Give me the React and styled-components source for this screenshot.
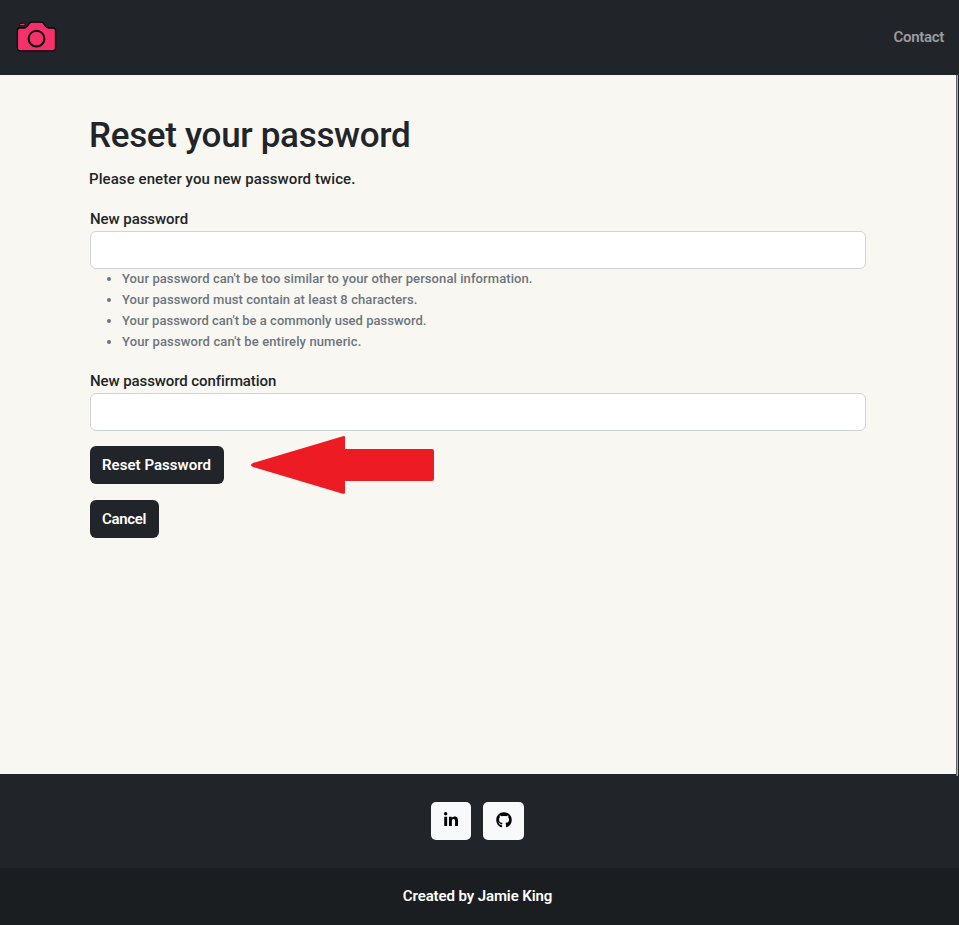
import React from "react";
import styled, { createGlobalStyle } from "styled-components";
import { FaLinkedinIn, FaGithub } from "react-icons/fa";

const GlobalStyle = createGlobalStyle`
  *, *::before, *::after { box-sizing: border-box; }
  body {
    margin: 0;
    overflow: hidden;
    background: #f8f7f2;
    color: #212529;
    font: 500 16px/24px Roboto, "Liberation Sans", sans-serif;
  }
`;

const Page = styled.div`
  height: 925px;
  display: flex;
  flex-direction: column;
  background: #212529;
`;
const Navbar = styled.nav`
  height: 75px;
  flex: none;
  padding: 0 15px 1px 16px;
  display: flex;
  align-items: center;
  justify-content: space-between;
`;
const Logo = styled.svg`
  display: block;
  width: 41px;
  height: 32px;
  margin-bottom: 2px;
`;
const NavLink = styled.a`
  color: #9b9d9e;
  font-weight: 600;
  font-size: 15px;
  letter-spacing: -0.3px;
`;
const Content = styled.main`
  position: relative;
  flex: 1;
  margin-right: 3px;
  padding: 40px 90px 0 90px;
  background: #f8f7f2;
`;
const ScrollEdge = styled.span`
  position: absolute;
  top: 0;
  right: -2px;
  width: 2px;
  height: calc(100% + 2px);
  background: linear-gradient(to right, #62646a 50%, #a9aaa8 50%);
`;
const Title = styled.h1`
  margin: 0 0 10px -1px;
  font-size: 35px;
  line-height: 42px;
  font-weight: 500;
  letter-spacing: ${(p) => p.$tracking}px;
  white-space: nowrap;
`;
const Text = styled.p`
  margin: 0 0 16px -1px;
  font-size: 15px;
  letter-spacing: ${(p) => p.$tracking}px;
`;
const Field = styled.div`
  margin-bottom: ${(p) => p.$gap}px;
`;
const Label = styled.label`
  display: block;
  font-size: 15px;
  letter-spacing: ${(p) => p.$tracking}px;
`;
const Input = styled.input`
  display: block;
  width: 100%;
  height: 38px;
  padding: 6px 12px;
  font: inherit;
  background: #fff;
  border: 1px solid #ced4da;
  border-radius: 6px;
`;
const Hints = styled.ul`
  margin: -1px 0 0;
  padding-left: 32px;
  color: #6c757d;
  font-size: 13px;
  line-height: 21px;
`;
const Hint = styled.li`
  letter-spacing: ${(p) => p.$tracking}px;
`;
const Actions = styled.div`
  display: flex;
  flex-direction: column;
  align-items: flex-start;
  gap: 16px;
`;
const ActionRow = styled.div`
  display: flex;
  height: 38px;
`;
const Button = styled.button`
  width: ${(p) => p.$width}px;
  height: 38px;
  padding: 0 1px 0 0;
  border: 0;
  border-radius: 6px;
  background: #212529;
  color: #fff;
  font: inherit;
  font-size: 15px;
  font-weight: 600;
  letter-spacing: ${(p) => p.$tracking}px;
  white-space: nowrap;
`;
const Arrow = styled.svg`
  display: block;
  flex: none;
  width: 185px;
  height: 60px;
  margin: -11px 0 0 26px;
`;
const Footer = styled.footer`
  flex: none;
`;
const Social = styled.div`
  height: 94px;
  padding: 28px 4px 0 0;
  display: flex;
  justify-content: center;
  gap: 12px;
`;
const SocialLink = styled.a`
  width: ${(p) => p.$width}px;
  height: 38px;
  display: flex;
  align-items: center;
  justify-content: center;
  padding-bottom: 2px;
  padding-right: ${(p) => p.$inset || 0}px;
  border-radius: 5px;
  background: #f8f9fa;
  color: #000;
`;
const Credit = styled.div`
  height: 57px;
  padding: 0 4px 2px 0;
  display: flex;
  align-items: center;
  justify-content: center;
  background: #1a1e21;
  color: #fff;
  font-size: 15px;
  font-weight: 600;
  letter-spacing: -0.1px;
`;

const hints = [
  ["Your password can't be too similar to your other personal information.", 0.085],
  ["Your password must contain at least 8 characters.", 0.09],
  ["Your password can't be a commonly used password.", 0.02],
  ["Your password can't be entirely numeric.", 0.12],
];

export default function App() {
  return (
    <>
      <GlobalStyle />
      <Page>
        <Navbar>
          <Logo viewBox="0 0 41 32" fill="#f5306b" stroke="#08090a" strokeWidth="1.3">
            <path d="M3.5 8H8.500q1.500 0 2.500-1.500L13.500 3.400Q14.500 2.200 16 2.200h9q1.500 0 2.500 1.200L29.500 6.500Q30.500 8 32.500 8h4.500q2.500 0 2.500 2.500V28q0 2.800-2.500 2.800H4Q1.400 30.800 1.400 28V10.500Q1.400 8 3.500 8Z" />
            <path d="M3.500 5.600V4.900Q3.500 3.300 5 3.300h2.600q1.500 0 1.500 1.600v.7Z" strokeWidth=".9" />
            <circle cx="20.500" cy="18.700" r="7.900" strokeWidth="2" />
          </Logo>
          <NavLink>Contact</NavLink>
        </Navbar>
        <Content>
          <ScrollEdge />
          <Title $tracking={-0.31}>Reset your password</Title>
          <Text $tracking={0.08}>Please eneter you new password twice.</Text>
          <Field $gap={17}>
            <Label $tracking={-0.06}>New password</Label>
            <Input type="password" />
            <Hints>
              {hints.map(([text, tracking]) => (
                <Hint key={text} $tracking={tracking}>{text}</Hint>
              ))}
            </Hints>
          </Field>
          <Field $gap={15}>
            <Label $tracking={-0.09}>New password confirmation</Label>
            <Input type="password" />
          </Field>
          <Actions>
            <ActionRow>
              <Button $width={134} $tracking={0.03}>Reset Password</Button>
              <Arrow viewBox="0 0 185 60" fill="#ed1c24">
                <path d="M1 30 Q1 29 3 28L92 1.500Q95 .5 95 2v12h87q2 0 2 2v28q0 2-2 2H95v11.500q0 2-3 1L3 32Q1 31 1 30Z" />
              </Arrow>
            </ActionRow>
            <Button $width={69} $tracking={-0.3}>Cancel</Button>
          </Actions>
        </Content>
        <Footer>
          <Social>
            <SocialLink $width={40} $inset={1}><FaLinkedinIn size={16} /></SocialLink>
            <SocialLink $width={41}><FaGithub size={16} /></SocialLink>
          </Social>
          <Credit>Created by Jamie King</Credit>
        </Footer>
      </Page>
    </>
  );
}
